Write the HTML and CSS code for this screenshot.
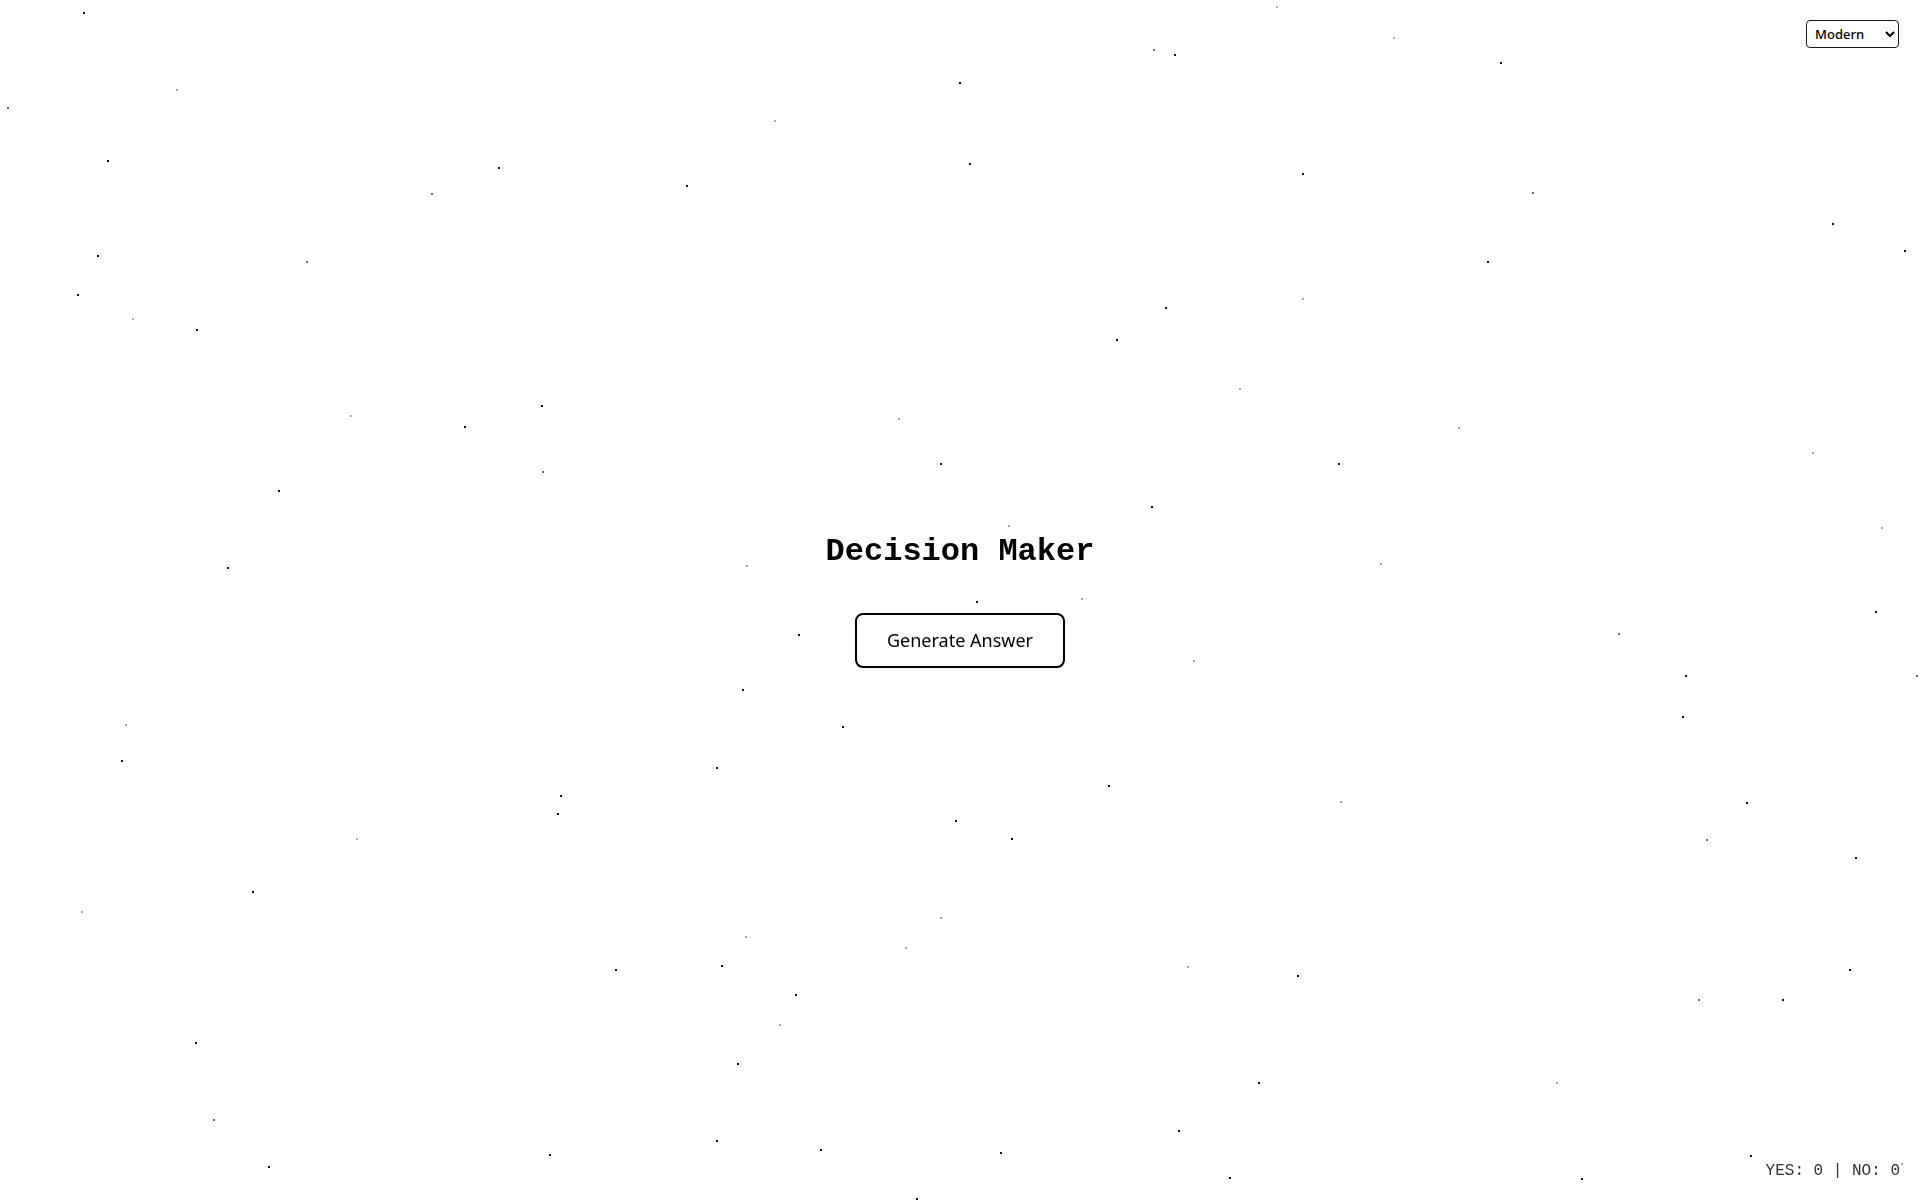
FILE: index.html
```html
<!DOCTYPE html>
<html lang="en">
<head>
<meta charset="utf-8">
<title>Decision Maker</title>
<link rel="stylesheet" href="styles.css">
</head>
<body>
<div class="stars" aria-hidden="true">
<i class="s" style="left:83px;top:12px"></i>
<i class="s l" style="left:1276px;top:6px"></i>
<i class="s g" style="left:1153px;top:49px"></i>
<i class="s" style="left:1174px;top:54px"></i>
<i class="s l" style="left:1393px;top:37px"></i>
<i class="s" style="left:959px;top:82px"></i>
<i class="s" style="left:1500px;top:62px"></i>
<i class="s l" style="left:176px;top:89px"></i>
<i class="s g" style="left:7px;top:107px"></i>
<i class="s l" style="left:774px;top:120px"></i>
<i class="s" style="left:107px;top:160px"></i>
<i class="s" style="left:498px;top:167px"></i>
<i class="s" style="left:969px;top:163px"></i>
<i class="s" style="left:1302px;top:173px"></i>
<i class="s g" style="left:431px;top:193px"></i>
<i class="s" style="left:686px;top:185px"></i>
<i class="s g" style="left:1532px;top:192px"></i>
<i class="s" style="left:1832px;top:223px"></i>
<i class="s" style="left:97px;top:255px"></i>
<i class="s g" style="left:306px;top:261px"></i>
<i class="s" style="left:1487px;top:261px"></i>
<i class="s" style="left:1904px;top:250px"></i>
<i class="s" style="left:77px;top:294px"></i>
<i class="s l" style="left:1302px;top:298px"></i>
<i class="s" style="left:1165px;top:307px"></i>
<i class="s l" style="left:132px;top:318px"></i>
<i class="s" style="left:196px;top:329px"></i>
<i class="s" style="left:1116px;top:339px"></i>
<i class="s l" style="left:1239px;top:388px"></i>
<i class="s" style="left:541px;top:405px"></i>
<i class="s l" style="left:350px;top:415px"></i>
<i class="s l" style="left:898px;top:418px"></i>
<i class="s" style="left:464px;top:426px"></i>
<i class="s l" style="left:1458px;top:427px"></i>
<i class="s l" style="left:1812px;top:452px"></i>
<i class="s" style="left:940px;top:463px"></i>
<i class="s g" style="left:542px;top:471px"></i>
<i class="s" style="left:1338px;top:463px"></i>
<i class="s" style="left:278px;top:490px"></i>
<i class="s" style="left:1151px;top:506px"></i>
<i class="s l" style="left:1008px;top:525px"></i>
<i class="s l" style="left:1881px;top:527px"></i>
<i class="s" style="left:227px;top:567px"></i>
<i class="s l" style="left:746px;top:565px"></i>
<i class="s l" style="left:1380px;top:563px"></i>
<i class="s l" style="left:1081px;top:598px"></i>
<i class="s" style="left:976px;top:601px"></i>
<i class="s" style="left:1875px;top:611px"></i>
<i class="s" style="left:798px;top:634px"></i>
<i class="s g" style="left:1618px;top:633px"></i>
<i class="s l" style="left:1193px;top:660px"></i>
<i class="s" style="left:1685px;top:675px"></i>
<i class="s g" style="left:1916px;top:675px"></i>
<i class="s" style="left:742px;top:689px"></i>
<i class="s" style="left:1682px;top:716px"></i>
<i class="s l" style="left:125px;top:724px"></i>
<i class="s" style="left:842px;top:726px"></i>
<i class="s" style="left:121px;top:760px"></i>
<i class="s" style="left:716px;top:767px"></i>
<i class="s" style="left:1108px;top:785px"></i>
<i class="s" style="left:560px;top:795px"></i>
<i class="s" style="left:557px;top:813px"></i>
<i class="s" style="left:1746px;top:802px"></i>
<i class="s l" style="left:1340px;top:801px"></i>
<i class="s" style="left:955px;top:820px"></i>
<i class="s" style="left:1011px;top:838px"></i>
<i class="s l" style="left:356px;top:838px"></i>
<i class="s g" style="left:1706px;top:839px"></i>
<i class="s" style="left:1855px;top:857px"></i>
<i class="s" style="left:252px;top:891px"></i>
<i class="s l" style="left:81px;top:911px"></i>
<i class="s l" style="left:940px;top:917px"></i>
<i class="s l" style="left:745px;top:936px"></i>
<i class="s l" style="left:905px;top:947px"></i>
<i class="s l" style="left:1187px;top:966px"></i>
<i class="s" style="left:721px;top:965px"></i>
<i class="s" style="left:615px;top:969px"></i>
<i class="s" style="left:1297px;top:975px"></i>
<i class="s" style="left:1849px;top:969px"></i>
<i class="s" style="left:795px;top:994px"></i>
<i class="s g" style="left:1698px;top:999px"></i>
<i class="s" style="left:1782px;top:999px"></i>
<i class="s l" style="left:779px;top:1024px"></i>
<i class="s" style="left:195px;top:1042px"></i>
<i class="s" style="left:737px;top:1063px"></i>
<i class="s" style="left:1258px;top:1082px"></i>
<i class="s l" style="left:1556px;top:1082px"></i>
<i class="s g" style="left:213px;top:1119px"></i>
<i class="s" style="left:1178px;top:1130px"></i>
<i class="s" style="left:716px;top:1140px"></i>
<i class="s" style="left:820px;top:1149px"></i>
<i class="s" style="left:1000px;top:1152px"></i>
<i class="s" style="left:549px;top:1154px"></i>
<i class="s" style="left:268px;top:1166px"></i>
<i class="s" style="left:1750px;top:1155px"></i>
<i class="s" style="left:1229px;top:1177px"></i>
<i class="s" style="left:1581px;top:1178px"></i>
<i class="s" style="left:916px;top:1198px"></i>
<i class="s l" style="left:1901px;top:1163px"></i>
</div>

<select class="theme-select" aria-label="Theme">
  <option>Modern</option>
  <option>Classic</option>
  <option>Retro</option>
</select>

<main class="app">
  <h1 class="title">Decision Maker</h1>
  <button class="generate" type="button">Generate Answer</button>
</main>

<div class="counter">YES: 0 | NO: 0</div>
</body>
</html>
```

FILE: styles.css
```css
html, body {
  margin: 0;
  padding: 0;
  background: #ffffff;
}

body {
  min-height: 100vh;
  font-family: "Noto Sans", "Open Sans", sans-serif;
  color: #000;
  overflow: hidden;
}

.stars {
  position: fixed;
  inset: 0;
  pointer-events: none;
}

.s {
  position: absolute;
  width: 2px;
  height: 2px;
  background: #111;
}

.s.g {
  background: #6e6e6e;
}

.s.l {
  background: #a8a8a8;
}

.app {
  position: relative;
  min-height: 100vh;
  display: flex;
  flex-direction: column;
  align-items: center;
  justify-content: center;
}

.title {
  margin: 0 0 43px;
  font-family: "Liberation Mono", "Courier New", monospace;
  font-size: 32px;
  font-weight: bold;
  line-height: normal;
  color: #000;
}

.generate {
  padding: 13px 30px;
  border: 2px solid #000;
  border-radius: 8px;
  background: #fff;
  color: #000;
  font-family: "Noto Sans", "Open Sans", sans-serif;
  font-size: 18px;
  font-weight: 400;
  line-height: 25px;
  cursor: pointer;
}

.theme-select {
  position: fixed;
  top: 20px;
  right: 21px;
  z-index: 2;
  width: 93px;
  height: 28px;
  padding: 0 4px;
  border: 1px solid #1a1a1a;
  border-radius: 4px;
  background: #fff;
  color: #000;
  font-family: "Noto Sans", "Open Sans", sans-serif;
  font-size: 13px;
  font-weight: 500;
}

.counter {
  position: fixed;
  right: 20px;
  bottom: 20px;
  z-index: 2;
  font-family: "Liberation Mono", "Courier New", monospace;
  font-size: 16px;
  line-height: 18px;
  color: #333;
}
```
